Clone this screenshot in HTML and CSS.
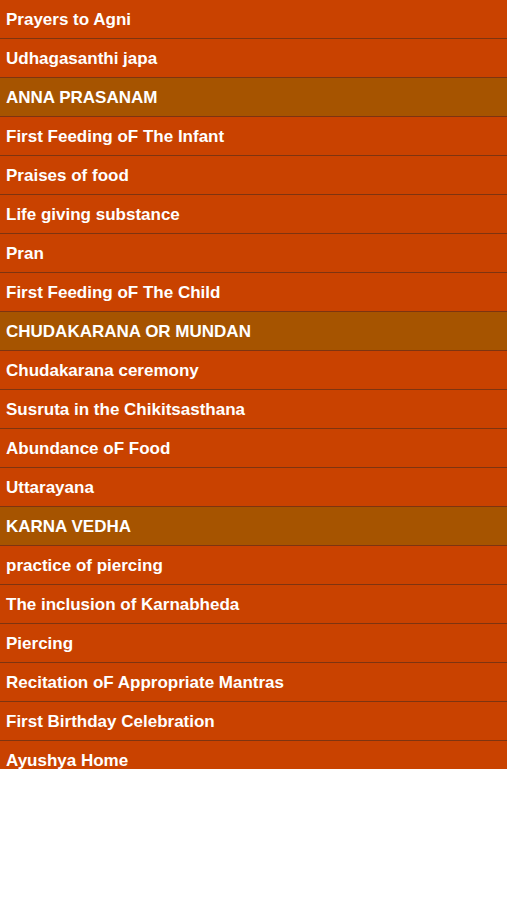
FILE: index.html
```html
<!DOCTYPE html>
<html>
<head>
<meta charset="utf-8">
<link rel="stylesheet" href="styles.css">
</head>
<body>
<div class="list">
  <div class="row">Prayers to Agni</div>
  <div class="row">Udhagasanthi japa</div>
  <div class="row head">ANNA PRASANAM</div>
  <div class="row">First Feeding oF The Infant</div>
  <div class="row">Praises of food</div>
  <div class="row">Life giving substance</div>
  <div class="row">Pran</div>
  <div class="row">First Feeding oF The Child</div>
  <div class="row head">CHUDAKARANA OR MUNDAN</div>
  <div class="row">Chudakarana ceremony</div>
  <div class="row">Susruta in the Chikitsasthana</div>
  <div class="row">Abundance oF Food</div>
  <div class="row">Uttarayana</div>
  <div class="row head">KARNA VEDHA</div>
  <div class="row">practice of piercing</div>
  <div class="row">The inclusion of Karnabheda</div>
  <div class="row">Piercing</div>
  <div class="row">Recitation oF Appropriate Mantras</div>
  <div class="row">First Birthday Celebration</div>
  <div class="row">Ayushya Home</div>
</div>
</body>
</html>
```

FILE: styles.css
```css
html, body {
  margin: 0;
  padding: 0;
  background: #ffffff;
}
.list {
  height: 769px;
  overflow: hidden;
  display: flex;
  flex-direction: column;
}
.row {
  flex: 0 0 auto;
  height: 37px;
  padding-top: 1px;
  line-height: 38px;
  padding-left: 6px;
  background: #c94200;
  border-bottom: 1px solid #7e3410;
  color: #ffffff;
  font-family: "Liberation Sans", Arial, sans-serif;
  font-weight: bold;
  font-size: 17px;
  white-space: nowrap;
  overflow: hidden;
}
.row.head {
  background: #a65400;
}
```
